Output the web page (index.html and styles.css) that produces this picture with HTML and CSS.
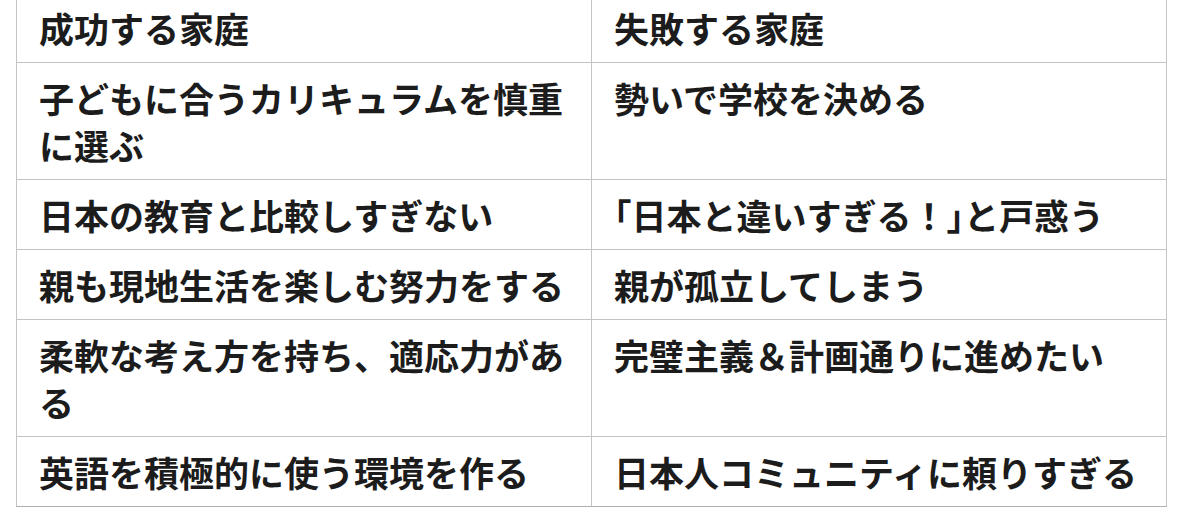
FILE: index.html
```html
<!DOCTYPE html>
<html lang="ja">
<head>
<meta charset="utf-8">
<link rel="stylesheet" href="styles.css">
</head>
<body>
<table class="compare">
  <tr><td>成功する家庭</td><td>失敗する家庭</td></tr>
  <tr><td>子どもに合うカリキュラムを慎重に選ぶ</td><td>勢いで学校を決める</td></tr>
  <tr><td>日本の教育と比較しすぎない</td><td><span class="half">「</span>日本と違いすぎる！<span class="half">」</span>と戸惑う</td></tr>
  <tr><td>親も現地生活を楽しむ努力をする</td><td>親が孤立してしまう</td></tr>
  <tr><td>柔軟な考え方を持ち、適応力がある</td><td>完璧主義＆計画通りに進めたい</td></tr>
  <tr><td>英語を積極的に使う環境を作る</td><td>日本人コミュニティに頼りすぎる</td></tr>
</table>
</body>
</html>
```

FILE: styles.css
```css
html, body {
  margin: 0;
  padding: 0;
  background: #ffffff;
  overflow: hidden;
}
.compare {
  margin: -8px 0 0 16px;
  width: 1151px;
  table-layout: fixed;
  border-collapse: collapse;
  font-family: "Noto Sans CJK JP", "Noto Sans", sans-serif;
  font-weight: 700;
  font-size: 35px;
  line-height: 47px;
  color: #1c1c1c;
}
.compare td {
  border: 1px solid #c4c4c4;
  padding: 11px 21px 11px 22px;
  vertical-align: top;
  text-align: left;
}
.compare tr:last-child td {
  border-bottom: 2px solid #b0b0b0;
}
.half {
  font-feature-settings: "halt";
}
```
